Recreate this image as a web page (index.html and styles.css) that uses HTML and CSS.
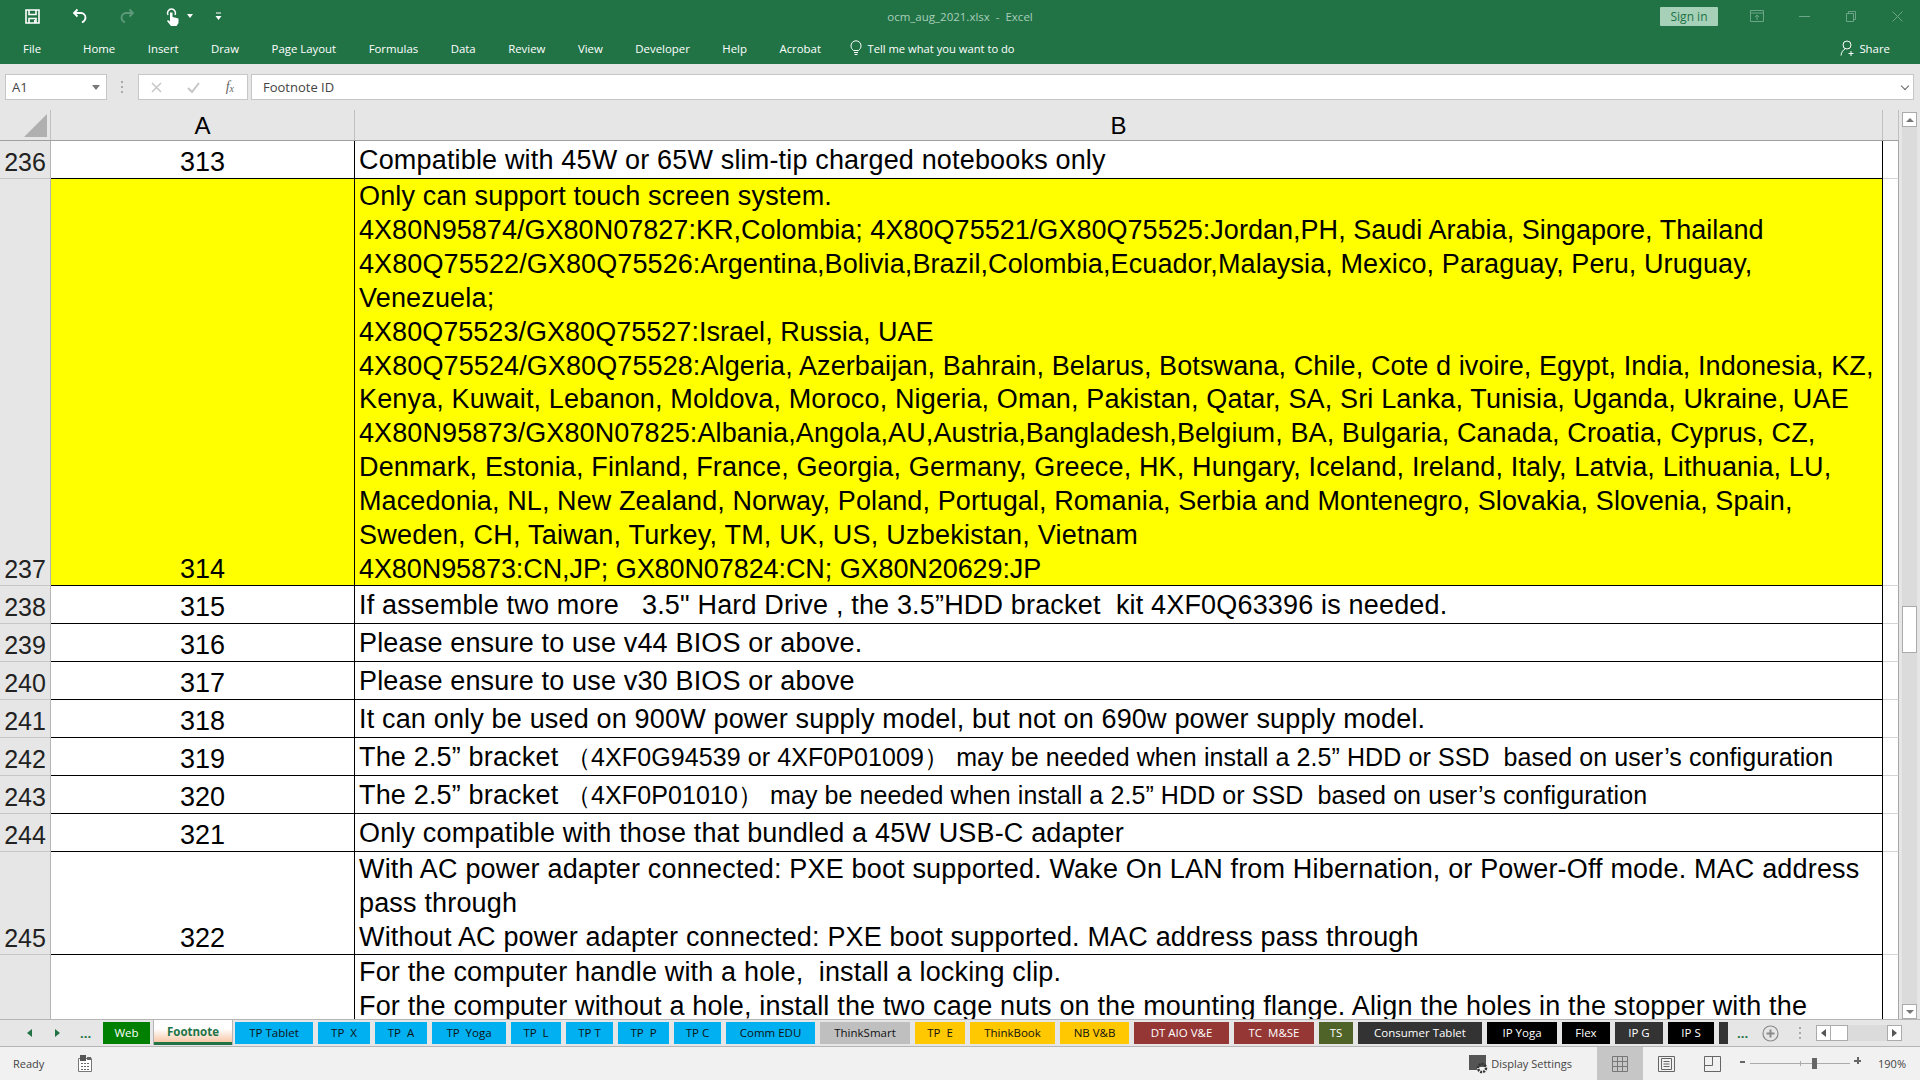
FILE: index.html
```html
<!DOCTYPE html>
<html lang="en">
  <head>
    <meta charset="utf-8">
    <title>ocm_aug_2021.xlsx - Excel</title>
    <link rel="stylesheet" href="styles.css">
  </head>
  <body>
    <header class="ribbon">
      <div class="titlebar">
        <div class="qat">
          <svg class="qat-save" width="15" height="15" viewBox="0 0 15 15"><path d="M1 1h13v13H1z M4 1v4.500h7V1 M4 14v-4.500h7V14" fill="none" stroke="#fff" stroke-width="1.600"/><path d="M9 11h1.500v3H9z" fill="#fff"/></svg>
          <svg class="qat-undo" width="16" height="16" viewBox="0 0 16 16"><path d="M5.500 1.500 2 5l3.500 3.500M2.500 5H9a4.500 4.500 0 0 1 4.500 4.500c0 2.500-1.500 4-3.500 5" fill="none" stroke="#fff" stroke-width="1.800"/></svg>
          <svg class="qat-redo" width="16" height="16" viewBox="0 0 16 16"><path d="M10.500 1.500 14 5l-3.500 3.500M13.500 5H7a4.500 4.500 0 0 0-4.500 4.500c0 2.500 1.500 4 3.500 5" fill="none" stroke="#5c9a79" stroke-width="1.800"/></svg>
          <svg class="qat-touch" width="17" height="19" viewBox="0 0 17 19"><path d="M3 8a4 4 0 1 1 7 0" fill="none" stroke="#fff" stroke-width="1.500"/><path d="M5 5.500h2.500V10l6 1.500V16l-2 3H6l-4-5 1-1 2 1.500z" fill="#fff"/></svg>
          <span class="caret"></span>
          <svg class="qat-more" width="7" height="9" viewBox="0 0 7 9"><path d="M1 1h5" stroke="#fff"/><path d="M0.500 4h6L3.500 8z" fill="#fff"/></svg>
        </div>
        <div class="doc-title">ocm_aug_2021.xlsx  -  Excel</div>
        <div class="win-controls">
          <span class="signin">Sign in</span>
          <svg class="win-opts" width="14" height="12" viewBox="0 0 14 12"><path d="M.5.500h13v11H.5zM.5 3h13M7 10V5M5 7l2-2 2 2" fill="none" stroke="#6ba688"/></svg>
          <svg class="win-min" width="11" height="1" viewBox="0 0 11 1"><path d="M0 .5h11" stroke="#6ba688"/></svg>
          <svg class="win-max" width="10" height="11" viewBox="0 0 10 11"><path d="M.5 2.500h7v8h-7zM2.500 2.500v-2h7v8h-2" fill="none" stroke="#6ba688"/></svg>
          <svg class="win-close" width="11" height="11" viewBox="0 0 11 11"><path d="M.5.500l10 10M10.500.500l-10 10" stroke="#6ba688"/></svg>
        </div>
      </div>
      <nav class="tabs-row">
        <span class="rtab rtab-file">File</span>
        <span class="rtab">Home</span>
        <span class="rtab">Insert</span>
        <span class="rtab">Draw</span>
        <span class="rtab">Page Layout</span>
        <span class="rtab">Formulas</span>
        <span class="rtab">Data</span>
        <span class="rtab">Review</span>
        <span class="rtab">View</span>
        <span class="rtab">Developer</span>
        <span class="rtab">Help</span>
        <span class="rtab">Acrobat</span>
        <span class="tellme">
          <svg width="12" height="16" viewBox="0 0 12 16"><path d="M3.500 10.500C2 9 1 8 1 5.800a5 5 0 0 1 10 0c0 2.200-1 3.200-2.500 4.700zM4 12.500h4M4.500 14.500h3" fill="none" stroke="#fff"/></svg>
          Tell me what you want to do
        </span>
        <span class="share">
          <svg width="15" height="16" viewBox="0 0 15 16"><circle cx="7" cy="5" r="4" fill="none" stroke="#fff"/><path d="M1 15.500c.5-3.500 2-5.500 4-6.500M11 11v5M8.500 13.500h5" fill="none" stroke="#fff"/></svg>
          Share
        </span>
      </nav>
    </header>

    <div class="formula-bar">
      <div class="name-box"><span>A1</span><i class="tri"></i></div>
      <div class="grip"></div>
      <div class="fx-box">
        <svg width="11" height="11" viewBox="0 0 11 11"><path d="M1 1l9 9M10 1l-9 9" stroke="#c6c6c6" stroke-width="1.500"/></svg>
        <svg width="13" height="11" viewBox="0 0 13 11"><path d="M1 6l4 4 7-9" fill="none" stroke="#c6c6c6" stroke-width="2"/></svg>
        <span class="fx">f<sub>x</sub></span>
      </div>
      <div class="formula-input"><span>Footnote ID</span><i class="chev"></i></div>
    </div>

    <main class="sheet">
      <div class="grid">
        <div class="col-heads">
          <div class="corner"><i></i></div>
          <div class="col-head col-a">A</div>
          <div class="col-head col-b">B</div>
          <div class="col-head col-c"></div>
        </div>

        <div class="row">
          <div class="num">236</div><div class="cell-a">313</div>
          <div class="cell-b">Compatible with 45W or 65W slim-tip charged notebooks only</div><div class="cell-c"></div>
        </div>
        <div class="row row-hl">
          <div class="num">237</div><div class="cell-a">314</div>
          <div class="cell-b">
            <div>Only can support touch screen system.</div>
            <div class="ls-a">4X80N95874/GX80N07827:KR,Colombia; 4X80Q75521/GX80Q75525:Jordan,PH, Saudi Arabia, Singapore, Thailand</div>
            <div class="ls-b">4X80Q75522/GX80Q75526:Argentina,Bolivia,Brazil,Colombia,Ecuador,Malaysia, Mexico, Paraguay, Peru, Uruguay,</div>
            <div>Venezuela;</div>
            <div class="ls-a">4X80Q75523/GX80Q75527:Israel, Russia, UAE</div>
            <div class="ls-b">4X80Q75524/GX80Q75528:Algeria, Azerbaijan, Bahrain, Belarus, Botswana, Chile, Cote d ivoire, Egypt, India, Indonesia, KZ,</div>
            <div class="ls-c">Kenya, Kuwait, Lebanon, Moldova, Moroco, Nigeria, Oman, Pakistan, Qatar, SA, Sri Lanka, Tunisia, Uganda, Ukraine, UAE</div>
            <div class="ls-b">4X80N95873/GX80N07825:Albania,Angola,AU,Austria,Bangladesh,Belgium, BA, Bulgaria, Canada, Croatia, Cyprus, CZ,</div>
            <div class="ls-c">Denmark, Estonia, Finland, France, Georgia, Germany, Greece, HK, Hungary, Iceland, Ireland, Italy, Latvia, Lithuania, LU,</div>
            <div class="ls-b">Macedonia, NL, New Zealand, Norway, Poland, Portugal, Romania, Serbia and Montenegro, Slovakia, Slovenia, Spain,</div>
            <div class="ls-d">Sweden, CH, Taiwan, Turkey, TM, UK, US, Uzbekistan, Vietnam</div>
            <div class="ls-e">4X80N95873:CN,JP; GX80N07824:CN; GX80N20629:JP</div>
          </div><div class="cell-c"></div>
        </div>
        <div class="row">
          <div class="num">238</div><div class="cell-a">315</div>
          <div class="cell-b">If assemble two more   3.5" Hard Drive , the 3.5”HDD bracket  kit 4XF0Q63396 is needed.</div><div class="cell-c"></div>
        </div>
        <div class="row">
          <div class="num">239</div><div class="cell-a">316</div>
          <div class="cell-b">Please ensure to use v44 BIOS or above.</div><div class="cell-c"></div>
        </div>
        <div class="row">
          <div class="num">240</div><div class="cell-a">317</div>
          <div class="cell-b">Please ensure to use v30 BIOS or above</div><div class="cell-c"></div>
        </div>
        <div class="row">
          <div class="num">241</div><div class="cell-a">318</div>
          <div class="cell-b">It can only be used on 900W power supply model, but not on 690w power supply model.</div><div class="cell-c"></div>
        </div>
        <div class="row">
          <div class="num">242</div><div class="cell-a">319</div>
          <div class="cell-b">The 2.5” bracket <span class="small">（4XF0G94539 or 4XF0P01009） may be needed when install a 2.5” HDD or SSD  based on user’s configuration</span></div><div class="cell-c"></div>
        </div>
        <div class="row">
          <div class="num">243</div><div class="cell-a">320</div>
          <div class="cell-b">The 2.5” bracket <span class="small">（4XF0P01010） may be needed when install a 2.5” HDD or SSD  based on user’s configuration</span></div><div class="cell-c"></div>
        </div>
        <div class="row">
          <div class="num">244</div><div class="cell-a">321</div>
          <div class="cell-b">Only compatible with those that bundled a 45W USB-C adapter</div><div class="cell-c"></div>
        </div>
        <div class="row row-tall">
          <div class="num">245</div><div class="cell-a">322</div>
          <div class="cell-b">With AC power adapter connected: PXE boot supported. Wake On LAN from Hibernation, or Power-Off mode. MAC address
pass through
Without AC power adapter connected: PXE boot supported. MAC address pass through</div><div class="cell-c"></div>
        </div>
        <div class="row row-tall">
          <div class="num"></div><div class="cell-a"></div>
          <div class="cell-b">For the computer handle with a hole,  install a locking clip.
For the computer without a hole, install the two cage nuts on the mounting flange. Align the holes in the stopper with the</div><div class="cell-c"></div>
        </div>
      </div>
      <aside class="vscroll">
        <div class="sb-btn"><i class="up"></i></div>
        <div class="sb-track"><div class="sb-thumb"></div></div>
        <div class="sb-btn"><i class="down"></i></div>
      </aside>
    </main>

    <div class="sheet-tabs">
      <div class="tab-nav">
        <i class="nav-l"></i><i class="nav-r"></i><b>...</b>
      </div>
      <div class="tabs">
        <span class="tab t-green">Web</span>
        <span class="tab t-active">Footnote</span>
        <span class="tab t-blue">TP Tablet</span>
        <span class="tab t-blue">TP  X</span>
        <span class="tab t-blue">TP  A</span>
        <span class="tab t-blue">TP  Yoga</span>
        <span class="tab t-blue">TP  L</span>
        <span class="tab t-blue">TP T</span>
        <span class="tab t-blue">TP  P</span>
        <span class="tab t-blue">TP C</span>
        <span class="tab t-blue">Comm EDU</span>
        <span class="tab t-grey">ThinkSmart</span>
        <span class="tab t-gold">TP  E</span>
        <span class="tab t-gold">ThinkBook</span>
        <span class="tab t-gold">NB V&amp;B</span>
        <span class="tab t-red">DT AIO V&amp;E</span>
        <span class="tab t-red">TC  M&amp;SE</span>
        <span class="tab t-olive">TS</span>
        <span class="tab t-dark">Consumer Tablet</span>
        <span class="tab t-black">IP Yoga</span>
        <span class="tab t-black">Flex</span>
        <span class="tab t-dark">IP G</span>
        <span class="tab t-black">IP S</span>
        <span class="tab t-dark"></span>
      </div>
      <b class="more">...</b>
      <svg class="add" width="17" height="17" viewBox="0 0 17 17"><circle cx="8.500" cy="8.500" r="7.500" fill="none" stroke="#8a8a8a" stroke-width="1.200"/><path d="M4.500 8.500h8M8.500 4.500v8" stroke="#8a8a8a" stroke-width="2"/></svg>
      <div class="grip grip-tabs"></div>
      <div class="hscroll">
        <div class="hs-btn"><i class="nav-l grey"></i></div>
        <div class="hs-thumb"></div>
        <div class="hs-track"></div>
        <div class="hs-btn"><i class="nav-r grey"></i></div>
      </div>
    </div>

    <footer class="status">
      <span class="ready">Ready</span>
      <svg class="calc" width="14" height="18" viewBox="0 0 14 18"><path d="M.5 4.500h13v13H.5z" fill="#fff" stroke="#777"/><path d="M2 1h6v6H2z" fill="#555"/><path d="M9 3h4v3H9zM3 9h2v1H3zM6 9h2v1H6zM9 9h2v1H9zM3 12h2v1H3zM6 12h2v1H6zM9 12h2v1H9zM3 15h2v1H3zM6 15h2v1H6zM9 15h2v1H9z" fill="#666"/></svg>
      <div class="display-settings">
        <svg width="20" height="20" viewBox="0 0 20 20"><path d="M0 1h17v12H8v3H0z" fill="#555"/><circle cx="13" cy="14" r="4" fill="none" stroke="#333" stroke-width="2.500" stroke-dasharray="2 1"/></svg>
        <span>Display Settings</span>
      </div>
      <div class="views">
        <div class="view view-on"><svg width="16" height="16" viewBox="0 0 16 16"><path d="M.5.500h15v15H.5zM5.500.500v15M10.500.500v15M.5 5.500h15M.5 10.500h15" fill="none" stroke="#777"/></svg></div>
        <div class="view"><svg width="17" height="16" viewBox="0 0 17 16"><path d="M.5.500h16v15H.5zM3.500 2.500h10v11h-10zM5.500 5.500h6M5.500 8h6M5.500 10.500h6" fill="none" stroke="#666"/></svg></div>
        <div class="view"><svg width="17" height="16" viewBox="0 0 17 16"><path d="M.5.500h16v15H.5zM.5 9.500h8M8.500.500v9" fill="none" stroke="#666"/></svg></div>
      </div>
      <div class="zoom">
        <i class="z-minus"></i>
        <div class="slider"><i class="s-tick"></i><i class="s-thumb"></i></div>
        <i class="z-plus"></i>
      </div>
      <span class="pct">190%</span>
    </footer>
  </body>
</html>
```

FILE: styles.css
```css
* {
  box-sizing: border-box;
}

html, body {
  margin: 0;
  padding: 0;
}

body {
  width: 1920px;
  height: 1080px;
  overflow: hidden;
  display: flex;
  flex-direction: column;
  background: #E6E6E6;
  font-family: "Open Sans", sans-serif;
  font-size: 12px;
  color: #444;
}

/* ribbon */
.ribbon {
  height: 64px;
  background: #217346;
  color: #fff;
  flex: none;
}

.titlebar {
  height: 32px;
  display: grid;
  grid-template-columns: 1fr auto 1fr;
  align-items: center;
}

.qat {
  display: flex;
  align-items: center;
  padding-left: 25px;
}

.qat-undo { margin-left: 32px; }
.qat-redo { margin-left: 31px; }
.qat-touch { margin-left: 30px; }
.qat-more { margin-left: 22px; }

.caret {
  margin-left: 5px;
  border: 3px solid transparent;
  border-top: 4px solid #fff;
  border-bottom: 0;
}

.doc-title {
  white-space: pre;
  font-size: 11.5px;
  color: #A9CDB9;
}

.win-controls {
  display: flex;
  align-items: center;
  justify-content: flex-end;
  padding-right: 17px;
}

.signin {
  width: 58px;
  height: 19px;
  line-height: 19px;
  text-align: center;
  background: #A6D0B7;
  color: #217346;
  border-radius: 1px;
  font-size: 12px;
}

.win-opts { margin-left: 32px; }
.win-min { margin-left: 35px; }
.win-max { margin-left: 36px; }
.win-close { margin-left: 36px; }

.tabs-row {
  height: 32px;
  display: flex;
  align-items: center;
  padding: 0 26px 0 23px;
}

.rtab {
  margin-right: 32.500px;
  font-size: 11.400px;
  white-space: nowrap;
}

.rtab-file {
  margin-right: 42px;
}

.tellme {
  display: flex;
  align-items: center;
  gap: 5px;
  margin-left: -3px;
  font-size: 11.200px;
}

.share {
  display: flex;
  align-items: center;
  gap: 4px;
  margin-left: auto;
  font-size: 11.400px;
  margin-right: 4px;
}

/* formula bar */
.formula-bar {
  height: 46px;
  flex: none;
  display: flex;
  align-items: center;
  padding: 0 6px 0 5px;
  font-size: 13px;
}

.name-box, .fx-box, .formula-input {
  height: 26px;
  background: #fff;
  border: 1px solid #C6C6C6;
  display: flex;
  align-items: center;
}

.name-box {
  width: 102px;
  padding: 0 6px;
  justify-content: space-between;
}

.tri {
  border: 4px solid transparent;
  border-top: 5px solid #777;
  border-bottom: 0;
}

.grip {
  width: 2px;
  height: 12px;
  margin: 0 15px 0 14px;
  background: repeating-linear-gradient(#AAA 0 2px, transparent 2px 5px);
}

.fx-box {
  width: 110px;
  padding: 0 13px 0 12px;
  justify-content: space-between;
  margin-right: 3px;
}

.fx {
  font-family: "Liberation Serif", serif;
  font-style: italic;
  font-size: 14px;
  color: #666;
}

.fx sub {
  font-size: 10px;
  vertical-align: -1px;
}

.formula-input {
  flex: 1;
  padding: 0 3px 0 11px;
  justify-content: space-between;
}

.chev {
  width: 6px;
  height: 6px;
  margin: -3px 2px 0 0;
  border-right: 1px solid #666;
  border-bottom: 1px solid #666;
  transform: rotate(45deg);
}

/* sheet */
.sheet {
  flex: 1;
  min-height: 0;
  display: flex;
}

.grid {
  width: 1899px;
  flex: none;
  overflow: hidden;
  font-family: "Liberation Sans", Arial, sans-serif;
  font-size: 27px;
  color: #000;
}

.col-heads {
  height: 31px;
  display: flex;
  border-bottom: 1px solid #9F9F9F;
  font-size: 24px;
}

.corner {
  width: 50px;
  position: relative;
}

.corner i {
  position: absolute;
  right: 3px;
  bottom: 3px;
  border-style: solid;
  border-width: 0 0 23px 23px;
  border-color: transparent transparent #B0B0B0 transparent;
}

.col-head {
  border-left: 1px solid #C0C0C0;
  text-align: center;
  line-height: 31px;
}

.col-a { width: 304px; }
.col-b { width: 1528px; }
.col-c { width: 17px; border-right: 1px solid #C0C0C0; }

.row {
  display: flex;
  height: 38px;
  line-height: 33.900px;
}

.row-hl {
  height: 407px;
}

.row-tall {
  height: 103px;
}

.num {
  width: 51px;
  flex: none;
  display: flex;
  align-items: flex-end;
  justify-content: center;
  background: #E6E6E6;
  color: #222;
  border-bottom: 1px solid #C6C6C6;
  border-right: 1px solid #B5B5B5;
  font-size: 25px;
  line-height: 31px;
}

.cell-a {
  width: 304px;
  flex: none;
  display: flex;
  align-items: flex-end;
  justify-content: center;
  background: #fff;
  border-right: 1px solid #000;
  border-bottom: 1px solid #000;
  line-height: 32px;
}

.cell-b {
  width: 1528px;
  flex: none;
  padding: 3px 0 0 4px;
  background: #fff;
  border-right: 1px solid #000;
  border-bottom: 1px solid #000;
  white-space: pre;
  overflow: hidden;
  letter-spacing: .17px;
}

.row-tall .cell-b {
  padding-top: 1px;
}

.row-hl .cell-b {
  padding-top: 1px;
  white-space: normal;
}

.row-hl .cell-b div {
  white-space: pre;
}

.cell-c {
  width: 16px;
  flex: none;
  background: #fff;
  border-right: 1px solid #A6A6A6;
  border-bottom: 1px solid #D4D4D4;
}

.row-hl .cell-a, .row-hl .cell-b {
  background: #FFFF00;
}

/* Excel's hinted widths differ a bit from line to line */
.ls-a { letter-spacing: .03px; }
.ls-b { letter-spacing: .1px; }
.ls-c { letter-spacing: .15px; }
.ls-d { letter-spacing: .24px; }
.ls-e { letter-spacing: -.08px; }

.small {
  font-size: 25px;
  letter-spacing: .09px;
}

/* scrollbars */
.vscroll {
  flex: 1;
  display: flex;
  flex-direction: column;
  padding: 2px 3px 0 3px;
}

.sb-btn {
  height: 15px;
  flex: none;
  background: #fff;
  border: 1px solid #ABABAB;
  display: flex;
  align-items: center;
  justify-content: center;
}

.up {
  border: 4px solid transparent;
  border-bottom: 4px solid #777;
  border-top: 0;
}

.down {
  border: 4px solid transparent;
  border-top: 4px solid #777;
  border-bottom: 0;
}

.sb-track {
  flex: 1;
  background: #DBDBDB;
  padding-top: 479px;
}

.sb-thumb {
  height: 47px;
  background: #fff;
  border: 1px solid #ABABAB;
}

/* sheet tabs */
.sheet-tabs {
  height: 28px;
  flex: none;
  display: flex;
  align-items: center;
  border-top: 1px solid #B5B5B5;
  border-bottom: 1px solid #B5B5B5;
}

.tab-nav {
  width: 103px;
  flex: none;
  display: flex;
  align-items: center;
  padding-left: 27px;
}

.tab-nav b, .more {
  color: #217346;
  font-size: 13px;
  line-height: 14px;
}

.tab-nav b {
  margin-left: 20px;
}

.nav-l {
  border: 4px solid transparent;
  border-right: 5px solid #217346;
  border-left: 0;
}

.nav-r {
  margin-left: 23px;
  border: 4px solid transparent;
  border-left: 5px solid #217346;
  border-right: 0;
}

.nav-l.grey { border-right-color: #555; }
.nav-r.grey { border-left-color: #555; margin-left: 0; }

.tabs {
  display: grid;
  grid-template-columns: 47px 75px 78px 52px 52px 74px 50px 47px 51px 47px 89px 90px 50px 85px 69px 95px 80px 34px 124px 70px 48px 48px 46px 9px;
  column-gap: 5px;
  height: 26px;
}

.tab {
  height: 22px;
  margin-top: 2px;
  line-height: 21px;
  text-align: center;
  white-space: pre;
  font-size: 11.500px;
  overflow: hidden;
}

.t-green { background: #008000; color: #fff; }
.t-blue { background: #00B0F0; color: #111; }
.t-grey { background: #BFBFBF; color: #111; }
.t-gold { background: #FFC800; color: #111; }
.t-red { background: #953735; color: #fff; }
.t-olive { background: #4F6228; color: #fff; }
.t-dark { background: #333; color: #fff; }
.t-black { background: #000; color: #fff; }

.t-active {
  height: 26px;
  margin: -1px -3px 0 -2px;
  line-height: 24px;
  font-weight: 700;
  color: #217346;
  background: linear-gradient(#fff 35%, #F8CBAD 85%, #F8CBAD 88%, #217346 88%);
  border: 1px solid #B5B5B5;
  border-bottom: 0;
}

.more {
  margin-left: 9px;
}

.add {
  margin-left: 14px;
}

.grip-tabs {
  margin: 0 15px 0 20px;
}

.hscroll {
  display: flex;
  height: 16px;
  width: 86px;
  flex: none;
}

.hs-btn {
  width: 15px;
  background: #fff;
  border: 1px solid #ABABAB;
  display: flex;
  align-items: center;
  justify-content: center;
}

.hs-thumb {
  width: 17px;
  background: #fff;
  border: 1px solid #ABABAB;
  border-left: 0;
}

.hs-track {
  flex: 1;
  background: #DBDBDB;
}

/* status bar */
.status {
  height: 33px;
  flex: none;
  display: flex;
  align-items: center;
  background: #F1F1F1;
  font-size: 11px;
  color: #444;
}

.ready {
  margin-left: 13px;
}

.calc {
  margin-left: 34px;
  margin-top: -2px;
}

.display-settings {
  display: flex;
  align-items: center;
  gap: 2px;
  margin-left: auto;
  margin-right: 25px;
}

.views {
  display: flex;
  align-self: stretch;
}

.view {
  width: 46px;
  display: flex;
  align-items: center;
  justify-content: center;
}

.view-on {
  background: #C6C6C6;
}

.zoom {
  display: flex;
  align-items: center;
  margin-left: 5px;
  width: 124px;
  position: relative;
}

.z-minus {
  width: 5px;
  height: 2px;
  margin-top: -4px;
  background: #666;
}

.slider {
  width: 100px;
  height: 1px;
  margin: 0 4px 0 5px;
  background: #ABABAB;
  position: relative;
}

.s-tick {
  position: absolute;
  left: 50px;
  top: -2px;
  width: 1px;
  height: 5px;
  background: #ABABAB;
}

.s-thumb {
  position: absolute;
  left: 62px;
  top: -5px;
  width: 5px;
  height: 11px;
  background: #666;
}

.z-plus {
  width: 7px;
  height: 7px;
  margin-top: -6px;
  background: linear-gradient(#666, #666) center / 100% 2px no-repeat, linear-gradient(#666, #666) center / 2px 100% no-repeat;
}

.pct {
  margin: 0 14px 0 14px;
}
```
